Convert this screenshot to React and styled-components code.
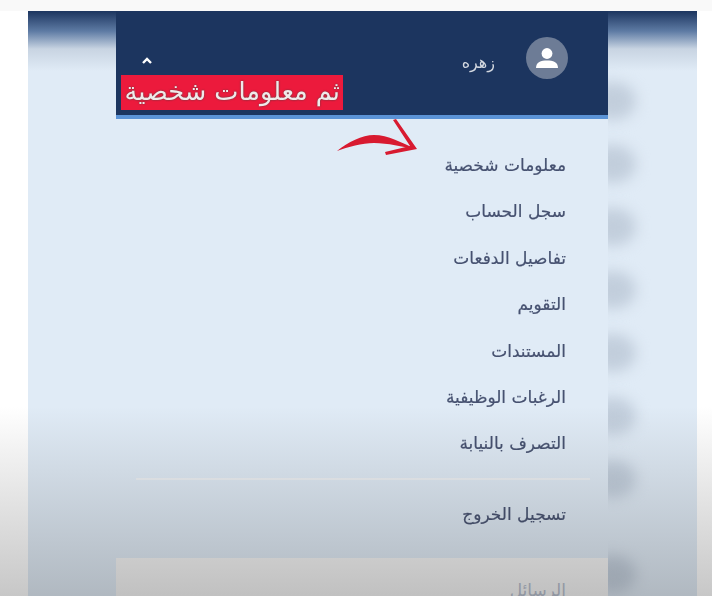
import React from "react";
import styled, { createGlobalStyle } from "styled-components";

const Global = createGlobalStyle`
html, body {
  margin: 0;
  background: #ffffff;
}
body {
  font-family: "DejaVu Sans", "Noto Sans", sans-serif;
}
`
const Page = styled.div`
position: relative;
width: 712px;
height: 596px;
overflow: hidden;
background: #ffffff;
`
const TopStrip = styled.div`
height: 11px;
background: #f9f9f9;
`
const Video = styled.div`
display: flex;
width: 669px;
height: 585px;
margin-left: 28px;
background: #e0ebf6;
`
const Side = styled.div`
display: flex;
flex-direction: column;
flex: none;
width: ${(p) => p.$width}px;
overflow: hidden;
background: linear-gradient(#1c355f 0, #5d7aa3 20px, #c8d4e2 38px, #e0ebf6 60px);
`
const Blobs = styled.div`
display: flex;
flex-direction: column;
gap: 25px;
padding-top: 71px;
`
const Blob = styled.div`
flex: none;
width: 46px;
height: 38px;
margin-top: ${(p) => p.$drop || 0}px;
margin-left: -18px;
border-radius: 50%;
background: #c2cedc;
filter: blur(7px);
`
const Panel = styled.div`
position: relative;
display: flex;
flex-direction: column;
width: 492px;
flex: none;
overflow: hidden;
`
const Header = styled.div`
display: flex;
flex: none;
justify-content: space-between;
align-items: flex-start;
height: 104px;
padding: 0 40px 0 25px;
background: #1c355f;
border-bottom: 4px solid #5b93d6;
`
const Chevron = styled.svg`
width: 12px;
height: 8px;
margin-top: 46px;
`
const User = styled.div`
display: flex;
align-items: flex-start;
gap: 31px;
margin-top: 26px;
`
const UserName = styled.span`
direction: rtl;
margin-top: 14px;
font-size: 16px;
line-height: 24px;
color: #d3d8e0;
filter: blur(0.3px);
`
const Avatar = styled.div`
display: flex;
align-items: center;
justify-content: center;
width: 42px;
height: 42px;
border-radius: 50%;
background: #6d7c96;
`
const Label = styled.div`
position: absolute;
left: 5px;
top: 64px;
width: 222px;
height: 35px;
direction: rtl;
padding-right: 3px;
box-sizing: border-box;
background: #ec1a3c;
color: #f0eaea;
font-size: 25.6px;
line-height: 33px;
white-space: nowrap;
overflow: hidden;
text-shadow: 0 0 2px #444;
filter: blur(0.3px);
`
const Arrow = styled.svg`
position: absolute;
left: 220px;
top: 105px;
width: 90px;
height: 50px;
`
const Menu = styled.ul`
display: flex;
flex: none;
flex-direction: column;
list-style: none;
margin: 0;
padding: 23px 42px 0 20px;
direction: rtl;
`
const Item = styled.li`
height: 46.4px;
line-height: 46.4px;
font-size: 17px;
color: #465170;
white-space: nowrap;
-webkit-text-stroke: 0.2px #465170;
filter: blur(0.3px);
`
const Divider = styled.li`
height: 2px;
margin: 11px -24px 11px 0;
background: #eef1f5;
`
const Card = styled.div`
flex: none;
margin-top: 21px;
height: 60px;
padding: 20px 42px 0 0;
direction: rtl;
box-sizing: border-box;
background: #f6f6f6;
color: #b4bccb;
font-size: 17px;
line-height: 24px;
`
const Fade = styled.div`
position: absolute;
left: 0;
right: 0;
bottom: 0;
height: 190px;
pointer-events: none;
background: linear-gradient(rgba(40, 50, 70, 0), rgba(40, 40, 40, 0.26));
`

const items = [
    "معلومات شخصية",
    "سجل الحساب",
    "تفاصيل الدفعات",
    "التقويم",
    "المستندات",
    "الرغبات الوظيفية",
    "التصرف بالنيابة",
]

const App = () => {
    return (
        <Page>
            <Global />
            <TopStrip />
            <Video>
                <Side $width={88} />
                <Panel>
                    <Header>
                        <Chevron viewBox="0 0 12 8">
                            <path d="M2 6 L6 2 L10 6" fill="none" stroke="#ffffff" strokeWidth="2.4" />
                        </Chevron>
                        <User>
                            <UserName>زهره</UserName>
                            <Avatar>
                                <svg width="24" height="24" viewBox="0 0 24 24">
                                    <circle cx="12" cy="7.5" r="5.4" fill="#ffffff" />
                                    <path d="M1 22 C1 16 6 14.5 12 14.5 C18 14.5 23 16 23 22 Z" fill="#ffffff" />
                                </svg>
                            </Avatar>
                        </User>
                    </Header>
                    <Label>ثم معلومات شخصية</Label>
                    <Arrow viewBox="0 0 90 50">
                        <path d="M1 35 C12 26 26 19 38 19 C52 19 66 27 80 33 C66 31 52 27 38 27 C26 27 12 31 1 35 Z" fill="#d81a30" />
                        <path d="M57 4 L60 3 L81 33 L50 39 L49 36 L74 30 Z" fill="#d81a30" />
                    </Arrow>
                    <Menu>
                        {items.map((item) => (
                            <Item key={item}>{item}</Item>
                        ))}
                        <Divider />
                        <Item>تسجيل الخروج</Item>
                    </Menu>
                    <Card>الرسائل</Card>
                </Panel>
                <Side $width={89}>
                    <Blobs>
                        {[0, 0, 0, 0, 0, 0, 0, 32].map((drop, n) => (
                            <Blob key={n} $drop={drop} />
                        ))}
                    </Blobs>
                </Side>
            </Video>
            <Fade />
        </Page>
    )
}

export default App
